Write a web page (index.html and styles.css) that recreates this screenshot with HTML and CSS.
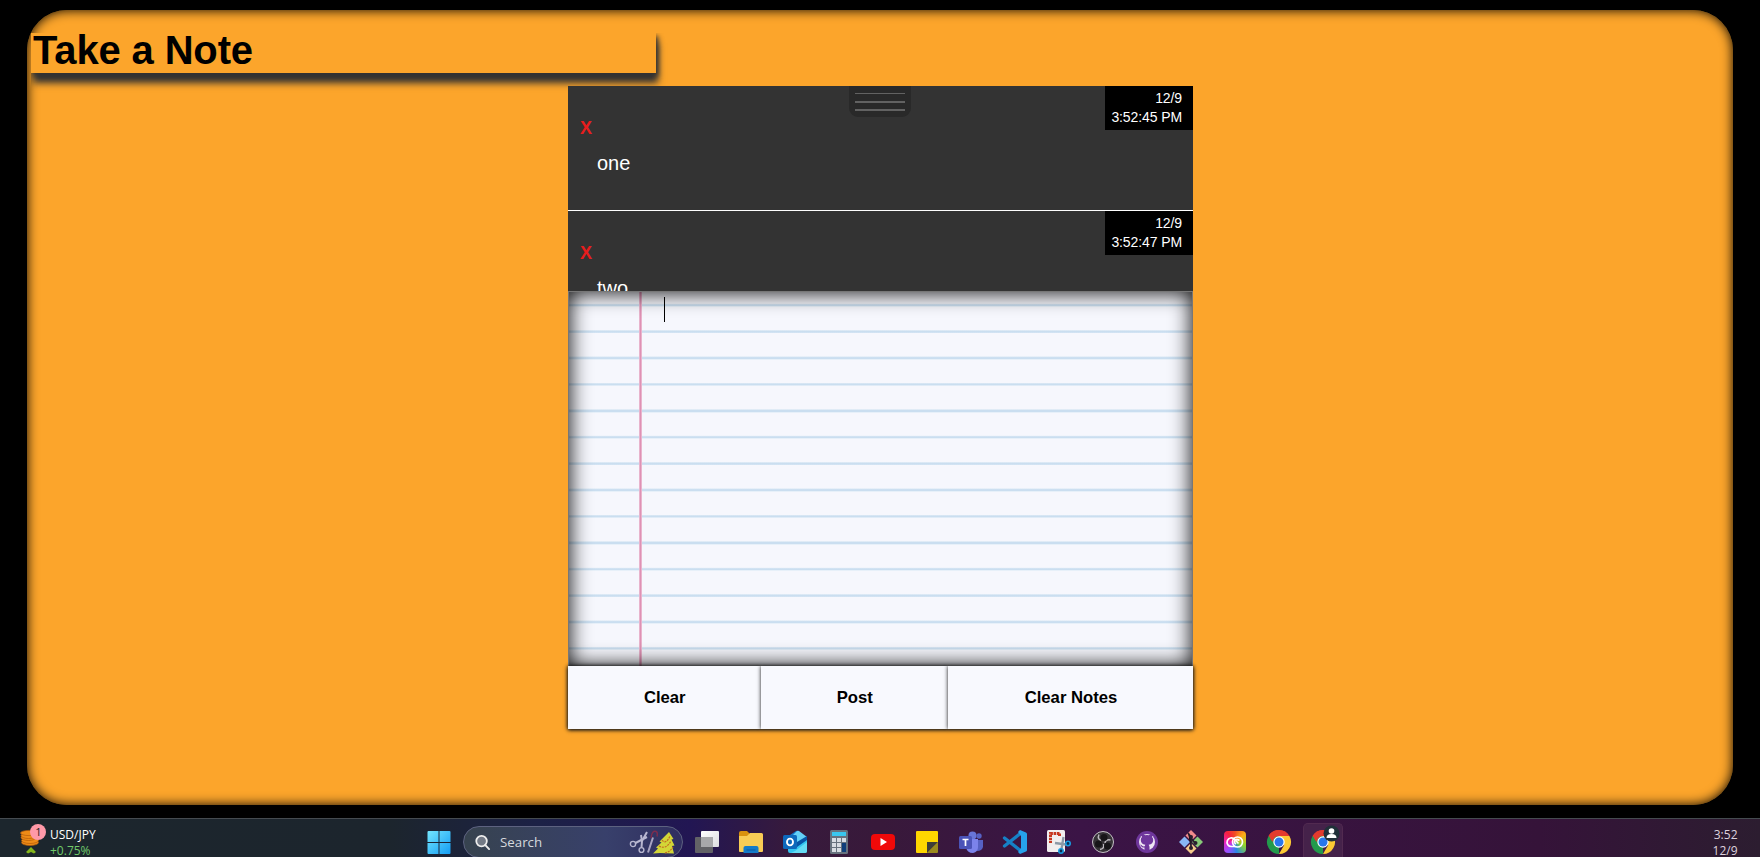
FILE: index.html
```html
<!DOCTYPE html>
<html lang="en">
<head>
<meta charset="utf-8">
<title>Take a Note</title>
<link rel="stylesheet" href="styles.css">
</head>
<body>
<div class="page">
<main class="board">
  <h1 class="title">Take a Note</h1>
  <section class="pad">
    <div class="notes">
      <article class="note">
        <div class="stamp">12/9<br>3:52:45 PM</div>
        <div class="delete">X</div>
        <p class="note-text">one</p>
      </article>
      <article class="note">
        <div class="stamp">12/9<br>3:52:47 PM</div>
        <div class="delete">X</div>
        <p class="note-text">two</p>
      </article>
      <div class="grip"><i class="thin"></i><i></i><i></i></div>
    </div>
    <div class="paper"><span class="caret"></span></div>
    <div class="actions">
      <button class="btn">Clear</button>
      <button class="btn">Post</button>
      <button class="btn">Clear Notes</button>
    </div>
  </section>
</main>
<footer class="taskbar">
  <div class="widget">
    <svg class="coins" viewBox="0 0 28 30" width="28" height="30">
      <g fill="#ee8b17" stroke="#b55c0a" stroke-width=".7">
        <ellipse cx="10" cy="18.500" rx="8.500" ry="3"/><ellipse cx="10" cy="16.500" rx="8.500" ry="3"/>
        <ellipse cx="8.500" cy="13.500" rx="7.500" ry="3"/><ellipse cx="8.500" cy="11.500" rx="7.500" ry="3"/>
        <ellipse cx="9" cy="9" rx="8.500" ry="2.600"/>
      </g>
      <path d="M6 28l5-5 5 5-2 1.500-3-1.500-3 1.500z" fill="#84b51b"/>
      <circle cx="18" cy="8" r="8" fill="#ff99a8"/>
      <text x="18.500" y="12" text-anchor="middle" class="badge">1</text>
    </svg>
    <div class="quote"><span>USD/JPY</span><span class="gain">+0.75%</span></div>
  </div>
  <svg class="start" viewBox="0 0 24 24" width="24" height="24">
    <defs><linearGradient id="win" x2="24" y2="24" gradientUnits="userSpaceOnUse"><stop stop-color="#77e8fe"/><stop offset="1" stop-color="#129cf4"/></linearGradient></defs>
    <path d="M.5 2q0-1 1-1H11.500v11H.5zM12.500 1H22.500q1 0 1 1V12H12.500zM.5 13H11.500V24H1.500q-1 0-1-1zM12.500 13H23.500V23q0 1-1 1H12.500z" fill="url(#win)"/>
  </svg>
  <div class="search">
    <svg viewBox="0 0 18 18" width="17" height="17"><circle cx="8" cy="7.500" r="5.600" fill="#737a86" stroke="#eee" stroke-width="1.900"/><path d="M12 11.700l4 4.300" stroke="#eee" stroke-width="2" stroke-linecap="round"/></svg>
    <span class="search-label">Search</span>
    <svg class="doodle" viewBox="0 0 46 26" width="46" height="26">
      <g fill="none" stroke="#b8b7d0" stroke-width="1.400"><circle cx="4" cy="15" r="2.600"/><circle cx="12.500" cy="21" r="2.400"/><path d="M6.500 14L18 8M12.500 18.500L13 12l5-9" stroke-width="2"/><path d="M13 12l-1-6" stroke-width="2"/></g>
      <path d="M24 8.500l-5 15" stroke="#a9a5c2" stroke-width="2"/>
      <path d="M22 9q1-8 5-6.500 2 1 1 5" fill="none" stroke="#7c2c4e" stroke-width="1.500"/>
      <path d="M40 3l4.500 7-2 .5 3 6-2.500 .5 2 7.500-14-.5-7 .5 5-5-2-1 5.500-5-2-1z" fill="#d3d637"/>
      <path d="M33 11q4 5 8-4M30 17q7 4 12-5M36 24q5-1 8-6" fill="none" stroke="#c66b22" stroke-width="1.200" stroke-dasharray="2 1"/>
    </svg>
  </div>
  <nav class="apps">
    <div class="app"><svg viewBox="0 0 24 24"><defs><linearGradient id="tv" x2="1" y2="1"><stop stop-color="#fff"/><stop offset="1" stop-color="#dcdcdf"/></linearGradient></defs><rect x="6" y="1" width="18" height="16" rx="1" fill="url(#tv)"/><rect y="7" width="18" height="16" rx="1" fill="#626266"/><path d="M6 7h12v10H6z" fill="#a8a8aa"/></svg></div>
    <div class="app"><svg viewBox="0 0 24 24"><path d="M0 3q0-2 2-2h6l3 3-3 3H0z" fill="#d9910e"/><path d="M8 6l3-3h11.500q1.500 0 1.500 1.500V21q0 1-1 1H1q-1 0-1-1V6z" fill="#f8cc55"/><path d="M4.500 23v-5q0-2 2-2h11q2 0 2 2v5z" fill="#147bc9"/><path d="M7.500 20h9" stroke="#075ba4"/></svg></div>
    <div class="app"><svg viewBox="0 0 24 24"><path d="M4 7l9-6q1-.5 2 0l9 7v10H4z" fill="#1374c9"/><path d="M10 5l4-4q1-.5 2 0l8 6-10 6z" fill="#63cff6"/><path d="M14 12l10-6v5L12 19z" fill="#0754a5"/><path d="M5 17l9 0 10-7v11q0 2-2 2H7q-2 0-2-2z" fill="#32c4ef"/><path d="M12 21l12-9v9q0 2-2 2H8z" fill="#65dcf4"/><rect y="5" width="14" height="14" rx="1.500" fill="#0d69bc"/><ellipse cx="7" cy="12" rx="3" ry="3.400" fill="none" stroke="#fff" stroke-width="1.900"/></svg></div>
    <div class="app"><svg viewBox="0 0 24 24"><rect x="3" width="18" height="24" rx="1.500" fill="#66727e"/><path d="M5 2h14v4H5z" fill="#39c7ee"/><path d="M5 8h4v4H5zm5 0h4v4h-4zm5 0h4v4h-4zM5 13h4v4H5zm5 0h4v4h-4zM5 18h4v4H5zm5 0h4v4h-4z" fill="#d6dce2"/><path d="M15 13h4v9h-4z" fill="#103f7a"/></svg></div>
    <div class="app"><svg viewBox="0 0 24 24"><rect y="4" width="24" height="16" rx="4" fill="#f00909"/><path d="M9.500 8v8l6.500-4z" fill="#fff"/></svg></div>
    <div class="app"><svg viewBox="0 0 24 24"><path d="M1 2q0-1 1-1h20q1 0 1 1v10L12 23H2q-1 0-1-1z" fill="#ffd600"/><path d="M12 12h11L12 23z" fill="#3f3d38"/><path d="M12 23L23 12v10q0 1-1 1z" fill="#9b8a1d"/></svg></div>
    <div class="app"><svg viewBox="0 0 24 24"><circle cx="13.500" cy="5.500" r="4" fill="#6875d8"/><circle cx="20" cy="6" r="2.700" fill="#5661c3"/><path d="M16 10h8v7q-1 4-6 4z" fill="#5661c3"/><path d="M7 9h12v8q0 5-5 6-6 0-7-6z" fill="#7b83eb"/><rect y="6" width="13" height="13" rx="1.500" fill="#4b54b8"/><path d="M3.500 9.500h6M6.500 9.500V16" stroke="#fff" stroke-width="1.700"/></svg></div>
    <div class="app"><svg viewBox="0 0 24 24"><path d="M1.500 8L18 21M1.500 16L18 3" stroke="#1681c7" stroke-width="3.300" stroke-linecap="round"/><path d="M17 0l6 2.500q1 .5 1 1.500v16q0 1-1 1.500L17 24l-2-2 3-4V6l-3-4z" fill="#26a2eb"/></svg></div>
    <div class="app"><svg viewBox="0 0 24 24"><rect width="18" height="22" rx="1.500" fill="#f1eeee"/><path d="M12.500 3.500H3.500V13M12.500 3.500V6" fill="none" stroke="#c7371f" stroke-width="3" stroke-dasharray="2.600 .7"/><path d="M8 13l11 1.500M16.500 7l-2 12" stroke="#8b99a6" stroke-width="2.300"/><circle cx="21" cy="13.500" r="2.200" fill="#112d50" stroke="#189ce1" stroke-width="1.600"/><circle cx="14" cy="21" r="2.200" fill="#112d50" stroke="#189ce1" stroke-width="1.600"/></svg></div>
    <div class="app"><svg viewBox="0 0 24 24"><circle cx="12" cy="12" r="10.500" fill="#353236" stroke="#c6c2c7"/><path d="M8 4.500q-2 4.500 2 6M19.500 10q-5-1-5.500 3M9 19.500q5-1 3.500-5.500" stroke="#bcb8be" stroke-width="1.500" fill="none"/><g fill="#171518"><circle cx="13" cy="7.500" r="3.500"/><circle cx="7.500" cy="14" r="3.500"/><circle cx="16.500" cy="16" r="3.500"/></g></svg></div>
    <div class="app"><svg viewBox="0 0 24 24"><circle cx="12" cy="12" r="11" fill="#6e369b"/><circle cx="12" cy="12" r="8" fill="#eee6f3"/><path d="M9.500 22v-4.500q-2.500.3-3.500-1.500l-1-1.500q1.500 0 2.500 1.500 1 .7 2.200.3l.6-1.500q-4.500-.7-4.500-4.800 0-1.800 1.200-3-.5-1.500 0-3 1.700 0 3.200 1.200 1.800-.5 3.600 0Q15.300 4 17 4q.5 1.500 0 3 1.200 1.200 1.200 3 0 4.100-4.500 4.800l.8 2V22z" fill="#6e369b"/></svg></div>
    <div class="app"><svg viewBox="0 0 24 24"><path d="M12 0l5.500 5.500L12 11 6.500 5.500z" fill="#f28b8b"/><path d="M5.500 6.500L11 12l-5.500 5.500L0 12z" fill="#88b7f5"/><path d="M18.500 6.500L24 12l-5.500 5.500L13 12z" fill="#88c979"/><path d="M12 13l5.500 5.500L12 24l-5.500-5.500z" fill="#f4c98a"/><path d="M9 3l3 4v11M12 8l4 5" stroke="#281d2c" stroke-width="1.700"/><circle cx="12" cy="7" r="2" fill="#281d2c"/><circle cx="16.500" cy="13" r="2" fill="#281d2c"/><circle cx="12" cy="18" r="2" fill="#281d2c"/></svg></div>
    <div class="app"><div class="cc"><svg viewBox="1 1 22 22"><g fill="none" stroke="#fff" stroke-width="1.700"><circle cx="14.500" cy="12" r="5"/><path d="M12 16.500H8.500a4.300 4.300 0 1 1 3-7.200l4 4.200"/><path d="M16.500 10.500q-3-2-4.500 0t1 3.500"/></g></svg></div></div>
    <div class="app"><svg viewBox="0 0 24 24"><g id="chrome"><path d="M12 12L1.600 6A12 12 0 0 1 22.400 6z" fill="#e33b2e"/><path d="M12 12V24A12 12 0 0 1 1.600 6z" fill="#229a4c"/><path d="M12 6h10.400A12 12 0 0 1 12 24l5.200-9z" fill="#fcc934"/><path d="M1.600 6l5.200 9L12 12V6z" fill="#229a4c"/><path d="M1.600 6A12 12 0 0 1 22.400 6H12a6 6 0 0 0-5.200 3l-1.500 3z" fill="#e33b2e"/><path d="M1.600 6l5.200 9 1 1L2 18z" fill="#229a4c"/><circle cx="12" cy="12" r="5.700" fill="#fff"/><circle cx="12" cy="12" r="4.500" fill="#2877ed"/></g></svg></div>
    <div class="app active"><svg viewBox="0 0 24 24"><use href="#chrome"/><circle cx="20.500" cy="3.500" r="8" fill="#203039"/><circle cx="20.500" cy="1" r="2.800" fill="#fff"/><path d="M15.500 8q0-4 5-4t5 4z" fill="#fff"/></svg></div>
  </nav>
  <div class="clock"><span>3:52</span><span>12/9</span></div>
</footer>
</div>
</body>
</html>
```
FILE: styles.css
```css
* { box-sizing: border-box; }
body { margin: 0; background: #000; font-family: "Liberation Sans", Arial, sans-serif; }
.page { height: 857px; padding-top: 10px; display: flex; flex-direction: column; justify-content: space-between; overflow: hidden; }
.board {
  width: 1706px; height: 795px; margin-left: 27px; padding: 23px 4px;
  border-radius: 40px; background: #fca52b; box-shadow: inset 0 0 12px #000;
}
.title {
  width: 625px; height: 40px; margin: 0; padding: 0 0 6px 2px;
  background: #fca52b; font-size: 40px; line-height: 34px; letter-spacing: -0.150px;
  box-shadow: 2px 3px 5px #333, 2px 10px 7px #333;
  clip-path: inset(0 -20px -30px 0);
}
.pad { width: 625px; margin: 13px 0 0 537px; position: relative; }
.notes { position: relative; height: 205px; overflow: hidden; background: #333; color: #fff; }
.note { position: relative; height: 125px; padding: 32px 12px 0; border-bottom: 1px solid #fff; }
.stamp {
  position: absolute; top: 0; right: 0; width: 88px; height: 44px; padding: 3px 11px 0 0;
  background: #000; font-size: 14px; line-height: 19px; letter-spacing: -0.100px; text-align: right; white-space: nowrap;
}
.delete { height: 21px; color: #e71d1d; font-size: 18px; font-weight: bold; line-height: 21px; }
.note-text { margin: 13px 0 0 17px; font-size: 20px; line-height: 23px; }
.grip {
  position: absolute; top: 0; left: 281px; width: 62px; height: 31px; padding: 7px 6px 0;
  display: flex; flex-direction: column; gap: 6px;
  border-radius: 0 0 9px 9px; background: #292929;
}
.grip i { height: 2px; background: #626262; }
.grip .thin { height: 1px; margin-bottom: 1px; }
.paper {
  height: 375px; padding: 5px 0 0 95px; border: 1px solid #777; border-bottom: 0;
  background:
    linear-gradient(90deg, transparent 69.500px, #f3d7e6 70px, #df91b4 71px, #df91b4 72px, #f3d7e6 73px, transparent 73.500px),
    repeating-linear-gradient(180deg, #e7f0f9 0 .6px, transparent .6px 23.400px, #e3edf7 23.800px, #cadef0 24.800px 26px, #e7f0f9 26.400px) 0 -12px / 100% 400px,
    #f6f7fd;
  box-shadow: inset 0 0 21px #000;
}
.caret { display: block; width: 1px; height: 25px; background: #000; }
.actions { display: flex; height: 63px; box-shadow: 0 1px 4px #222; position: relative; }
.btn {
  flex: none; border: 0; padding: 1px 0 0 1px; background: #f8f9fe; color: #000;
  font: bold 16.670px "Liberation Sans", Arial, sans-serif; box-shadow: 0 0 4px #111;
}
.btn:nth-child(1) { width: 192.500px; }
.btn:nth-child(2) { width: 187.500px; }
.btn:nth-child(3) { width: 245px; }
.taskbar {
  display: flex; align-items: flex-start; height: 39px; border-top: 1px solid #454b50; overflow: hidden;
  background: linear-gradient(90deg, #1c262d 0, #1c252d 390px, #1c2146 540px, #221653 690px, #371a3c 790px, #38193a 880px, #3b1446 1080px, #351339 1540px, #2c1d30 1760px);
  font-family: "Open Sans", "Noto Sans", sans-serif; color: #fff;
}
.widget { display: flex; gap: 2px; width: 407px; padding: 5px 0 0 20px; }
.coins { flex: none; overflow: visible; }
.badge { font-size: 11px; fill: #222; }
.quote { display: flex; flex-direction: column; padding-top: 3px; font-size: 12px; line-height: 16px; }
.gain { color: #70c96a; }
.start { flex: none; margin: 11px 0 0 19.500px; }
.search {
  display: flex; align-items: center; width: 220px; height: 32px; margin: 7px 0 0 12.500px; padding: 0 7px 0 10px;
  border: 1px solid #5d6280; border-radius: 16px; background: linear-gradient(90deg, #37434f, #38406b 65%, #302e60);
}
.search-label { margin-left: 9px; color: #d5d8dd; font-size: 13.300px; }
.doodle { margin-left: auto; }
.apps { display: flex; margin-left: 2px; padding-top: 4px; }
.app { display: flex; justify-content: center; width: 44px; height: 40px; padding-top: 7px; }
.app svg { width: 24px; height: 24px; overflow: visible; }
.active { width: 40px; margin-left: 2px; border: 1px solid #512a50; border-bottom: 0; border-radius: 5px 5px 0 0; background: #45224a; padding-top: 6px; }
.cc { width: 22px; height: 22px; margin-top: 1px; border-radius: 4px; background: conic-gradient(#f24d23, #fcae17 50deg, #8dd62c 110deg, #2987e6 170deg, #9b4dff 220deg, #ed23bc 270deg, #f6213d 320deg, #f24d23); }
.cc svg { display: block; width: 22px; height: 22px; }
.clock { display: flex; flex-direction: column; margin: 8px 22.500px 0 auto; font-size: 12px; line-height: 16px; text-align: right; color: #ddd2df; }
```
